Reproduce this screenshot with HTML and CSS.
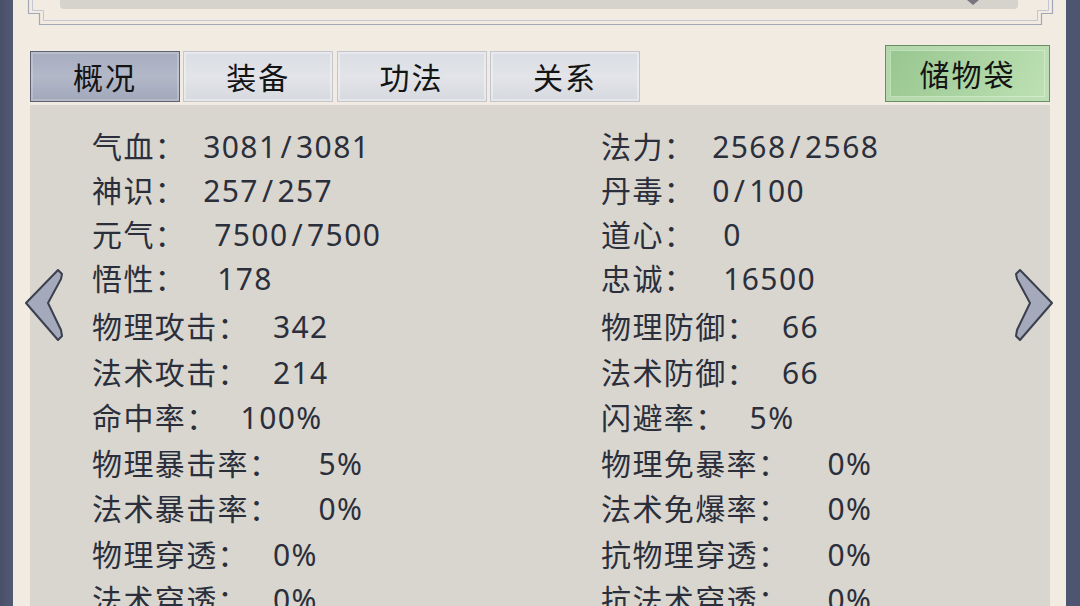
FILE: index.html
```html
<!DOCTYPE html>
<html lang="zh-CN">
<head>
    <meta charset="UTF-8">
    <meta name="viewport" content="width=device-width, initial-scale=1.0">
    <title>角色属性</title>
    <link rel="stylesheet" href="styles.css">
</head>
<body>
    <div class="screen">
        <div class="main">
            <div class="top">
                <div class="top-box"></div>
                <svg class="top-frame" width="1053" height="28" viewBox="0 0 1053 28">
                    <polyline points="15.5,0 15.5,13.5 26.5,13.5 26.5,24.5 1028.5,24.5 1028.5,13.5 1039.5,13.5 1039.5,0" fill="none" stroke="#a3a8b9" stroke-width="1.2"/>
                    <polyline points="19.5,0 19.5,10.5 30.5,10.5 30.5,20.5 1024.5,20.5 1024.5,10.5 1035.5,10.5 1035.5,0" fill="none" stroke="#c3c6d0" stroke-width="1"/>
                    <polygon points="954,0 960,5 966,0" fill="#77767f"/>
                </svg>
            </div>

            <div class="tabbar">
                <button class="tab active">概况</button>
                <button class="tab">装备</button>
                <button class="tab">功法</button>
                <button class="tab">关系</button>
                <button class="bag">储物袋</button>
            </div>

            <div class="panel">
                <div class="stats stats-base">
                    <div class="stat"><span class="k">气血：</span><span class="v g17">3081<span class="sl">/</span>3081</span></div>
                    <div class="stat"><span class="k">法力：</span><span class="v g17">2568<span class="sl">/</span>2568</span></div>
                    <div class="stat"><span class="k">神识：</span><span class="v g17">257<span class="sl">/</span>257</span></div>
                    <div class="stat"><span class="k">丹毒：</span><span class="v g17">0<span class="sl">/</span>100</span></div>
                    <div class="stat"><span class="k">元气：</span><span class="v g28">7500<span class="sl">/</span>7500</span></div>
                    <div class="stat"><span class="k">道心：</span><span class="v g28">0</span></div>
                    <div class="stat"><span class="k">悟性：</span><span class="v g31">178</span></div>
                    <div class="stat"><span class="k">忠诚：</span><span class="v g28">16500</span></div>
                </div>
                <div class="stats stats-combat">
                    <div class="stat"><span class="k">物理攻击：</span><span class="v g24">342</span></div>
                    <div class="stat"><span class="k">物理防御：</span><span class="v g24">66</span></div>
                    <div class="stat"><span class="k">法术攻击：</span><span class="v g24">214</span></div>
                    <div class="stat"><span class="k">法术防御：</span><span class="v g24">66</span></div>
                    <div class="stat"><span class="k">命中率：</span><span class="v g23">100%</span></div>
                    <div class="stat"><span class="k">闪避率：</span><span class="v g23">5%</span></div>
                    <div class="stat"><span class="k">物理暴击率：</span><span class="v g38">5%</span></div>
                    <div class="stat"><span class="k">物理免暴率：</span><span class="v g38">0%</span></div>
                    <div class="stat"><span class="k">法术暴击率：</span><span class="v g38">0%</span></div>
                    <div class="stat"><span class="k">法术免爆率：</span><span class="v g38">0%</span></div>
                    <div class="stat"><span class="k">物理穿透：</span><span class="v g24">0%</span></div>
                    <div class="stat"><span class="k">抗物理穿透：</span><span class="v g38">0%</span></div>
                    <div class="stat"><span class="k">法术穿透：</span><span class="v g24">0%</span></div>
                    <div class="stat"><span class="k">抗法术穿透：</span><span class="v g38">0%</span></div>
                </div>

                <svg class="arrow arrow-left" width="40" height="74" viewBox="0 0 40 74">
                    <path d="M2 35 L34 2 L38 6 L37 11 L24 35 L37 62 L38 68 L34 72 Z" fill="#a4a9bb" stroke="#3b3f4e" stroke-width="2" stroke-linejoin="round"/>
                </svg>
                <svg class="arrow arrow-right" width="40" height="74" viewBox="0 0 40 74">
                    <path d="M38 35 L6 2 L2 6 L3 11 L16 35 L3 62 L2 68 L6 72 Z" fill="#a4a9bb" stroke="#3b3f4e" stroke-width="2" stroke-linejoin="round"/>
                </svg>
            </div>
        </div>
    </div>
</body>
</html>
```

FILE: styles.css
```css
body {
    margin: 0;
    height: 606px;
    overflow: hidden;
    font-family: "Noto Sans", "Noto Sans CJK SC", sans-serif;
    background-color: #4e5570;
}
.screen {
    height: 100%;
    padding: 0 14px 0 13px;
    background: linear-gradient(90deg, #4a5069 0%, #525a74 1.2%, #4e5570 100%);
}
.main {
    height: 100%;
    background-color: #f1ebe1;
    overflow: hidden;
}
.top {
    position: relative;
    height: 26px;
}
.top-box {
    margin: 0 48px 0 47px;
    height: 9px;
    background-color: #d6d3cc;
    border-radius: 0 0 4px 4px;
}
.top-frame {
    position: absolute;
    left: 0;
    top: 0;
}
.tabbar {
    display: flex;
    align-items: flex-end;
    gap: 3.3px;
    height: 57px;
    margin-top: 19px;
    padding: 0 16px 0 17px;
}
.tab,
.bag {
    display: flex;
    align-items: center;
    justify-content: center;
    padding: 0 0 2px 0;
    font-family: "Noto Sans CJK SC", sans-serif;
    font-size: 30px;
    letter-spacing: 2px;
    color: #141414;
    cursor: pointer;
}
.tab {
    width: 150px;
    height: 51px;
    border: 1px solid #c4c6cc;
    background: linear-gradient(180deg, #dadde3 0%, #e2e4e9 50%, #d6d9df 100%);
    box-shadow: inset 0 0 0 2px rgba(255, 255, 255, 0.35);
}
.tab.active {
    border-color: #5d6170;
    background: linear-gradient(180deg, #a6adbf 0%, #b2b8c8 50%, #a1a8ba 100%);
    box-shadow: inset 0 0 0 2px rgba(255, 255, 255, 0.2);
}
.bag {
    width: 165px;
    height: 57px;
    margin-left: auto;
    border: 1px solid #6a8f67;
    background: linear-gradient(120deg, #97c58f 0%, #a8d29f 45%, #bfe1b5 100%);
    box-shadow: inset 0 0 0 4px rgba(170, 210, 160, 0.5), inset 0 0 0 5px rgba(235, 250, 230, 0.45);
}
.panel {
    position: relative;
    height: 520px;
    margin: 3px 16px 0 17px;
    padding: 20px 0 0 62px;
    background-color: #d9d6cf;
}
.stats {
    display: grid;
    grid-template-columns: 509px 1fr;
    font-size: 30px;
    letter-spacing: 1.4px;
    color: #2b2f3b;
    white-space: nowrap;
}
.stats-base {
    grid-auto-rows: 44px;
    line-height: 44px;
}
.stats-combat {
    margin-top: 3.25px;
    grid-auto-rows: 45.5px;
    line-height: 45.5px;
}
.sl {
    margin: 0 3px;
}
.g17 { margin-left: 17px; }
.g23 { margin-left: 23px; }
.g24 { margin-left: 24px; }
.g28 { margin-left: 28px; }
.g31 { margin-left: 31px; }
.g38 { margin-left: 38px; }
.arrow {
    position: absolute;
    top: 163px;
}
.arrow-left {
    left: -6px;
}
.arrow-right {
    right: -4px;
}
```
